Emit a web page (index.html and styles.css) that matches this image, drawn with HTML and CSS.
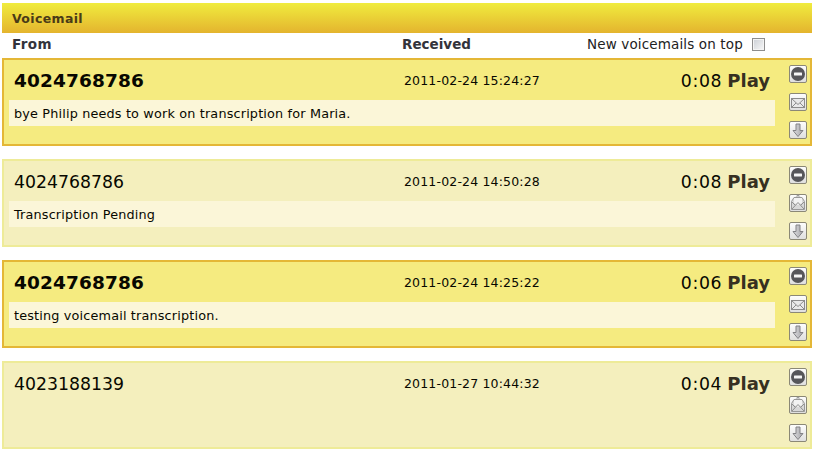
FILE: index.html
```html
<!DOCTYPE html>
<html lang="en">
<head>
<meta charset="utf-8">
<title>Voicemail</title>
<link rel="stylesheet" href="styles.css">
</head>
<body>
<svg class="defs" width="0" height="0" aria-hidden="true">
  <defs>
    <linearGradient id="face" x1="0" y1="0" x2="0" y2="1"><stop offset="0" stop-color="#fefefe"/><stop offset="1" stop-color="#dedede"/></linearGradient>
    <linearGradient id="metal" x1="0" y1="0" x2="1" y2="0"><stop offset="0" stop-color="#dddde0"/><stop offset="1" stop-color="#a5a5a9"/></linearGradient>
    <symbol id="button" viewBox="0 0 18 18"><rect x=".5" y=".5" width="17" height="17" rx="1.5" fill="url(#face)" stroke="#8b8876"/></symbol>
    <symbol id="remove" viewBox="0 0 18 18"><use href="#button"/><circle cx="9" cy="9" r="7" fill="#56565a"/><rect x="5" y="7.5" width="8" height="3" rx=".5" fill="#f5f5f5"/></symbol>
    <symbol id="unread" viewBox="0 0 18 18"><use href="#button"/><g fill="#e9e9e9" stroke="#8c8c8c"><rect x="2.5" y="5.500" width="13" height="9"/><path d="M2.500 14.500 7 10M15.500 14.500 11 10M2.500 5.500 9 11.500l6.500-6" fill="none"/></g></symbol>
    <symbol id="read" viewBox="0 0 18 18"><use href="#button"/><path d="M6.500 2.500 9 .5l2.500 2z" fill="#999"/><path d="M2.500 7.500 5 3.500h8l2.500 4v8h-13z" fill="#d8d8d8" stroke="#999"/><path d="M5 4h8v5l-4 2-4-2z" fill="#f3f3f3"/><path d="M3 15 9 8.500l6 6.500M3 8l3 3M15 8l-3 3" fill="none" stroke="#8f8f8f"/></symbol>
    <symbol id="download" viewBox="0 0 18 18"><use href="#button"/><path d="M7 3h4v6.500h3L9 15.500 4 9.500h3z" fill="url(#metal)" stroke="#828286"/></symbol>
  </defs>
</svg>
<main class="voicemail">
  <h1 class="title"><span>Voicemail</span></h1>
  <div class="columns">
    <strong class="from">From</strong>
    <strong class="received">Received</strong>
    <label class="sort"><span>New voicemails on top</span><input type="checkbox"></label>
  </div>
  <section class="messages">
    <article class="message new">
      <div class="content">
        <div class="summary"><span class="number">4024768786</span><time>2011-02-24 15:24:27</time><div class="playback"><span class="duration">0:08</span><b class="play">Play</b></div></div>
        <p class="transcript">bye Philip needs to work on transcription for Maria.</p>
      </div>
      <div class="actions"><svg><use href="#remove"/></svg><svg><use href="#unread"/></svg><svg><use href="#download"/></svg></div>
    </article>
    <article class="message">
      <div class="content">
        <div class="summary"><span class="number">4024768786</span><time>2011-02-24 14:50:28</time><div class="playback"><span class="duration">0:08</span><b class="play">Play</b></div></div>
        <p class="transcript">Transcription Pending</p>
      </div>
      <div class="actions"><svg><use href="#remove"/></svg><svg><use href="#read"/></svg><svg><use href="#download"/></svg></div>
    </article>
    <article class="message new">
      <div class="content">
        <div class="summary"><span class="number">4024768786</span><time>2011-02-24 14:25:22</time><div class="playback"><span class="duration">0:06</span><b class="play">Play</b></div></div>
        <p class="transcript">testing voicemail transcription.</p>
      </div>
      <div class="actions"><svg><use href="#remove"/></svg><svg><use href="#unread"/></svg><svg><use href="#download"/></svg></div>
    </article>
    <article class="message">
      <div class="content">
        <div class="summary"><span class="number">4023188139</span><time>2011-01-27 10:44:32</time><div class="playback"><span class="duration">0:04</span><b class="play">Play</b></div></div>
      </div>
      <div class="actions"><svg><use href="#remove"/></svg><svg><use href="#read"/></svg><svg><use href="#download"/></svg></div>
    </article>
  </section>
</main>
</body>
</html>
```
FILE: styles.css
```css
* { box-sizing: border-box; }
body { margin: 0; background: #fff; color: #080800; font-family: "DejaVu Sans", Verdana, sans-serif; white-space: nowrap; overflow: hidden; }
.defs { display: block; }
.voicemail { width: 810px; margin: 3px 0 0 2px; }
.title { height: 30px; margin: 0; padding-left: 10px; background: linear-gradient(#f0ec3e, #e4b42e); color: #493b17; font-size: 12.5px; line-height: 31px; letter-spacing: .35px; }
.columns { display: grid; grid-template-columns: 390px 185px 1fr; height: 25px; padding-left: 10px; color: #33333b; font-size: 14px; line-height: 23px; }
.columns strong { font-size: 13.5px; }
.columns .from { letter-spacing: .4px; }
.sort { display: flex; align-items: center; height: 23px; color: #222; font-size: 13.5px; letter-spacing: .14px; }
.sort input { appearance: none; width: 13px; height: 13px; margin: 0 0 0 9px; border: 1px solid #8d8d8d; background: linear-gradient(135deg, #cbcfd5, #f8f8f8); box-shadow: inset 0 0 0 1px #f4f4f4; }
.messages { display: grid; gap: 13px; }
.message { display: flex; height: 88px; padding: 5px 3px 5px 5px; border: 2px solid #eeeb98; background: #f4efbd; }
.message.new { border-color: #e4b736; background: #f5eb80; }
.content { width: 766px; }
.summary { display: grid; grid-template-columns: 390px 1fr auto; align-items: center; height: 35px; padding: 0 5px 5px; }
.number { padding-top: 1px; font-size: 17.3px; }
.duration { font-size: 17.3px; letter-spacing: .7px; }
.new .number { padding-top: 0; font-size: 18.5px; font-weight: bold; letter-spacing: .12px; }
time { font-size: 12.5px; letter-spacing: .17px; }
.playback { display: flex; gap: 5px; align-items: baseline; }
.play { color: #363021; font-size: 18px; }
.transcript { height: 26px; margin: 0; padding-left: 5px; background: #fbf6d8; font-size: 12.8px; line-height: 27px; letter-spacing: .17px; }
.actions { display: grid; align-content: start; gap: 10px; margin-left: 14px; }
.actions svg { display: block; width: 18px; height: 18px; }
```
